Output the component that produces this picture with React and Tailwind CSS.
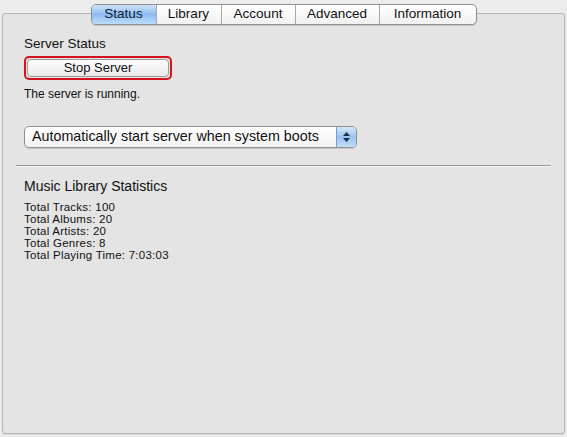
const tabs = [
  { label: 'Status', w: 'w-[64px]', active: true },
  { label: 'Library', w: 'w-[65px]' },
  { label: 'Account', w: 'w-[74px]' },
  { label: 'Advanced', w: 'w-[84px]' },
  { label: 'Information', w: 'w-[97px]' },
];

const stats = [
  'Total Tracks: 100',
  'Total Albums: 20',
  'Total Artists: 20',
  'Total Genres: 8',
  'Total Playing Time: 7:03:03',
];

export default function App() {
  return (
    <div className="h-[437px] w-[567px] bg-[#ececec] pl-[2px] pr-[2px] pt-[13px] pb-[3px] font-['Liberation_Sans',sans-serif] text-[#111]">
      <div className="flex h-full flex-col rounded-[3px] border border-[#b4b4b4] bg-[#e4e4e4] shadow-[0_1px_1px_rgba(0,0,0,0.08)]">
        <div className="-mt-[10px] flex justify-center">
          <div className="flex h-[21px] overflow-hidden rounded-[5px] border border-[#8e8e8e] bg-gradient-to-b from-[#ffffff] to-[#f1f1f1] shadow-[0_1px_1px_rgba(0,0,0,0.15)]">
            {tabs.map((t, i) => (
              <div
                key={t.label}
                className={`${t.w} flex items-center justify-center text-[13.5px] ${i > 0 ? 'border-l border-[#a8a8a8]' : ''} ${
                  t.active ? 'bg-gradient-to-b from-[#cfe3f8] via-[#8dbcf0] to-[#bcdcfb] text-[#0c1a33]' : ''
                }`}
              >
                {t.label}
              </div>
            ))}
          </div>
        </div>

        <div className="px-[21px] pt-[11px]">
          <div className="text-[13.5px] leading-[16px]">Server Status</div>
          <div className="mt-[4px] w-[148px] rounded-[5px] border-2 border-[#d3141e] p-px">
            <div className="flex h-[18px] items-center justify-center rounded-[4px] border border-[#9a9a9a] bg-gradient-to-b from-[#ffffff] via-[#f4f4f4] to-[#e9e9e9] text-[13px]">
              Stop Server
            </div>
          </div>
          <div className="mt-[7px] text-[12px] leading-[14px]">The server is running.</div>

          <div className="mt-[25px] flex h-[22px] w-[333px] items-center overflow-hidden rounded-[5px] border border-[#8f8f8f] bg-gradient-to-b from-[#ffffff] to-[#f2f2f2] shadow-[0_1px_1px_rgba(0,0,0,0.12)]">
            <div className="flex-1 pl-[7px] text-[14.3px]">Automatically start server when system boots</div>
            <div className="flex h-full w-[20px] flex-col items-center justify-center gap-[2px] border-l border-[#7a9ccc] bg-gradient-to-b from-[#d6e8fb] via-[#98c3f2] to-[#c3def9]">
              <svg width="7" height="4" viewBox="0 0 7 4"><path d="M3.5 0L7 4H0Z" fill="#1d2a40" /></svg>
              <svg width="7" height="4" viewBox="0 0 7 4"><path d="M0 0H7L3.5 4Z" fill="#1d2a40" /></svg>
            </div>
          </div>
        </div>

        <div className="mx-[13px] mt-[17px] h-px bg-[#9a9a9a] shadow-[0_1px_0_#f4f4f4]" />

        <div className="px-[21px] pt-[12px]">
          <div className="text-[14px] leading-[16px]">Music Library Statistics</div>
          <div className="mt-[7px] text-[11.5px] leading-[12px] tracking-[0.25px]">
            {stats.map((s) => (
              <div key={s}>{s}</div>
            ))}
          </div>
        </div>
      </div>
    </div>
  );
}
